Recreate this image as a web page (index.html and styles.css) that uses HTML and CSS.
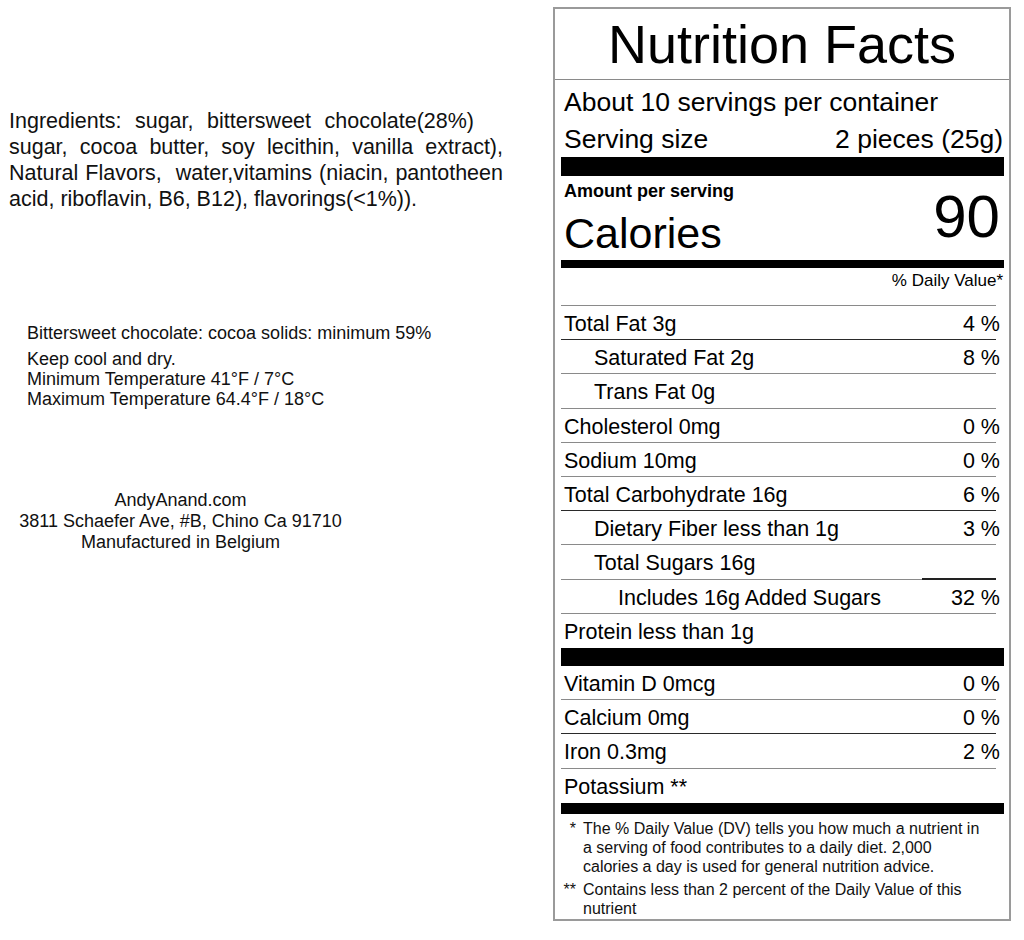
FILE: index.html
```html
<!DOCTYPE html>
<html lang="en">
<head>
<meta charset="utf-8">
<title>Nutrition Facts</title>
<link rel="stylesheet" href="styles.css">
</head>
<body>
<div class="page">
  <div class="info">
    <div class="ingredients">
      <div class="ing-line ing-first">Ingredients: sugar, bittersweet chocolate(28%)</div>
      <div class="ing-line ing-full">sugar, cocoa butter, soy lecithin, vanilla extract),</div>
      <div class="ing-line ing-full">Natural Flavors,&nbsp; water,vitamins (niacin, pantotheen</div>
      <div class="ing-line">acid, riboflavin, B6, B12), flavorings(&lt;1%)).</div>
    </div>
    <div class="storage">
      <p class="storage-lead">Bittersweet chocolate: cocoa solids: minimum 59%</p>
      <p>Keep cool and dry.</p>
      <p>Minimum Temperature 41°F / 7°C</p>
      <p>Maximum Temperature 64.4°F / 18°C</p>
    </div>
    <div class="address">
      <p>AndyAnand.com</p>
      <p>3811 Schaefer Ave, #B, Chino Ca 91710</p>
      <p>Manufactured in Belgium</p>
    </div>
  </div>

  <section class="label">
    <h1 class="title">Nutrition Facts</h1>
    <div class="label-body">
      <div class="servings">
        <div class="servings-line">About 10 servings per container</div>
        <div class="servings-line split"><span>Serving size</span><span class="serving-value">2 pieces (25g)</span></div>
      </div>
      <div class="bar bar-thick"></div>
      <div class="calories">
        <div class="calories-left">
          <div class="amount">Amount per serving</div>
          <div class="calories-name">Calories</div>
        </div>
        <div class="calories-value">90</div>
      </div>
      <div class="bar bar-medium"></div>
      <div class="dv"><span>% Daily Value*</span></div>

      <div class="row row-dark"><span>Total Fat 3g</span><span class="val">4 %</span></div>
      <div class="row indent"><span>Saturated Fat 2g</span><span class="val">8 %</span></div>
      <div class="row indent"><span>Trans Fat 0g</span><span class="val"></span></div>
      <div class="row"><span>Cholesterol 0mg</span><span class="val">0 %</span></div>
      <div class="row"><span>Sodium 10mg</span><span class="val">0 %</span></div>
      <div class="row row-dark"><span>Total Carbohydrate 16g</span><span class="val">6 %</span></div>
      <div class="row indent"><span>Dietary Fiber less than 1g</span><span class="val">3 %</span></div>
      <div class="row indent sugars"><span>Total Sugars 16g</span><span class="val"></span></div>
      <div class="row indent2"><span>Includes 16g Added Sugars</span><span class="val">32 %</span></div>
      <div class="row row-last"><span>Protein less than 1g</span><span class="val"></span></div>
      <div class="bar bar-thick2"></div>
      <div class="row"><span>Vitamin D 0mcg</span><span class="val">0 %</span></div>
      <div class="row row-dark"><span>Calcium 0mg</span><span class="val">0 %</span></div>
      <div class="row"><span>Iron 0.3mg</span><span class="val">2 %</span></div>
      <div class="row row-last"><span>Potassium **</span><span class="val"></span></div>
      <div class="bar bar-bottom"></div>

      <div class="footnotes">
        <span class="mark">*</span>
        <p class="note">The % Daily Value (DV) tells you how much a nutrient in a serving of food contributes to a daily diet. 2,000 calories a day is used for general nutrition advice.</p>
        <span class="mark mark-second">**</span>
        <p class="note note-second">Contains less than 2 percent of the Daily Value of this nutrient</p>
      </div>
    </div>
  </section>
</div>
</body>
</html>
```

FILE: styles.css
```css
* {
  box-sizing: border-box;
}

html, body {
  margin: 0;
  padding: 0;
  background: #fff;
}

body {
  font-family: "Liberation Sans", Arial, sans-serif;
  color: #000;
}

p, h1 {
  margin: 0;
}

.page {
  display: flex;
  align-items: flex-start;
}

/* ---------- left information column ---------- */
.info {
  width: 553px;
  flex: none;
  padding-top: 108px;
  color: #111;
}

.ingredients {
  padding-left: 9px;
  font-size: 21.5px;
  line-height: 26px;
}

.ing-line {
  white-space: nowrap;
}

.ing-first {
  width: 465px;
  text-align: justify;
  text-align-last: justify;
  white-space: normal;
}

.ing-full {
  width: 494px;
  text-align: justify;
  text-align-last: justify;
  white-space: normal;
}

.storage {
  margin-top: 111px;
  padding-left: 27px;
  font-size: 18px;
  line-height: 20px;
}

.storage-lead {
  margin-bottom: 6px;
}

.address {
  margin-top: 81px;
  width: 361px;
  text-align: center;
  font-size: 18px;
  line-height: 21px;
}

/* ---------- nutrition label ---------- */
.label {
  flex: none;
  width: 458px;
  margin-top: 7px;
  border: 2px solid #9a9a9a;
}

.title {
  height: 71px;
  line-height: 70px;
  font-size: 54px;
  font-weight: normal;
  text-align: center;
  border-bottom: 1px solid #8a8a8a;
}

.label-body {
  padding: 0 5px 1px 6px;
}

.servings {
  padding: 4px 3px 0 3px;
  font-size: 26.5px;
  line-height: 36.5px;
}

.split {
  display: flex;
  justify-content: space-between;
}

.serving-value {
  margin-right: -2px;
}

.bar {
  background: #000;
}

.bar-thick {
  height: 19px;
}

.bar-medium {
  height: 8px;
}

.bar-thick2 {
  height: 18px;
}

.bar-bottom {
  height: 11px;
}

.calories {
  display: flex;
  justify-content: space-between;
  padding: 5px 4px 3px 3px;
}

.amount {
  font-size: 18px;
  font-weight: bold;
  line-height: 20px;
}

.calories-name {
  margin-top: 8px;
  font-size: 43px;
  line-height: 48px;
}

.calories-value {
  align-self: flex-end;
  font-size: 60px;
  line-height: 60px;
  margin-bottom: 10px;
}

.dv {
  margin-right: 8px;
  padding: 3px 0 14px;
  font-size: 17px;
  line-height: 20px;
  text-align: right;
  border-bottom: 1px solid #8a8a8a;
}

.dv span {
  display: inline-block;
  margin-right: -7px;
}

.row {
  position: relative;
  display: flex;
  justify-content: space-between;
  margin-right: 8px;
  padding: 3px 0 0 3px;
  font-size: 21.5px;
  line-height: 30.2px;
  border-bottom: 1px solid #8a8a8a;
}

.row-dark {
  border-bottom-color: #2a2a2a;
}

.row-last {
  border-bottom: 0;
  padding-bottom: 1px;
}

.row .val {
  margin-right: -4px;
}

.indent {
  padding-left: 33px;
}

.indent2 {
  padding-left: 57px;
}

.sugars::after {
  content: "";
  position: absolute;
  right: 0;
  bottom: -1px;
  width: 74px;
  height: 2px;
  background: #222;
}

.footnotes {
  display: grid;
  grid-template-columns: 15px 404px;
  column-gap: 7px;
  padding-top: 5px;
  font-size: 16px;
  line-height: 19px;
  color: #111;
}

.mark {
  text-align: right;
}

.mark-second,
.note-second {
  margin-top: 4px;
}
```
